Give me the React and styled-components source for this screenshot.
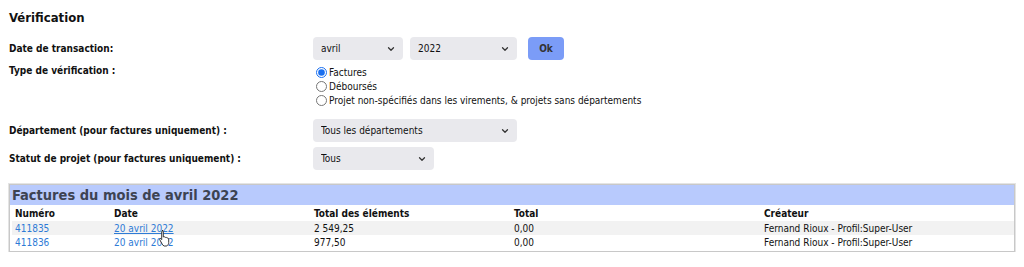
import React from "react";
import styled, { createGlobalStyle } from "styled-components";
import { ChevronDown } from "lucide-react";

const Global = createGlobalStyle`
	body {
		margin: 0;
		background: #fff;
		font-family: "DejaVu Sans Condensed", "DejaVu Sans", sans-serif;
		font-size: 10px;
		color: #111;
	}
`;

const Page = styled.div`
	padding: 10px 9px 0 9px;
`;

const Title = styled.h1`
	margin: 0 0 11px 0;
	font-size: 13px;
	font-weight: bold;
	line-height: 16px;
`;

const Form = styled.div`
	display: grid;
	grid-template-columns: 304px 1fr;
	align-items: center;
`;

const Label = styled.div`
	font-weight: bold;
	margin-top: ${(p) => p.$mt || 0}px;
	align-self: ${(p) => (p.$top ? "start" : "center")};
	padding-top: ${(p) => (p.$top ? 2 : 0)}px;
`;

const Controls = styled.div`
	display: flex;
	align-items: center;
	gap: 7px;
	margin-top: ${(p) => p.$mt || 0}px;
`;

const SelectWrap = styled.div`
	position: relative;
	width: ${(p) => p.$w}px;
	height: 23px;
`;

const Select = styled.select`
	appearance: none;
	width: 100%;
	height: 100%;
	border: none;
	border-radius: 4px;
	background: #e9e9ed;
	font-family: inherit;
	font-size: 10px;
	color: #111;
	padding: 0 8px;
`;

const Chevron = styled(ChevronDown)`
	position: absolute;
	right: 7px;
	top: 7px;
	pointer-events: none;
`;

const OkButton = styled.button`
	margin-left: 4px;
	width: 36px;
	height: 23px;
	border: none;
	border-radius: 4px;
	background: #7b9cf7;
	font-family: inherit;
	font-weight: bold;
	font-size: 10px;
	color: #333;
`;

const Radios = styled.div`
	display: flex;
	flex-direction: column;
	margin-top: 5px;
	padding-left: 3px;
`;

const RadioRow = styled.label`
	display: flex;
	align-items: center;
	height: 14px;
	gap: 2px;
`;

const Radio = styled.input`
	margin: 0;
	width: 11px;
	height: 11px;
	accent-color: #1a6ff0;
`;

const Box = styled.div`
	margin-top: 14px;
	width: 1006px;
	border: 1px solid #c8c8c8;
	box-shadow: 0 0 0 1px #e4e4e4;
	box-sizing: border-box;
	position: relative;
`;

const BoxHeader = styled.div`
	background: #b8cafd;
	height: 20px;
	line-height: 20px;
	padding-left: 2px;
	font-size: 14.5px;
	font-weight: bold;
	color: #3d4352;
`;

const Table = styled.table`
	width: 1002px;
	margin: 1px 0 2px 2px;
	border-collapse: collapse;
	table-layout: fixed;
`;

const Th = styled.th`
	text-align: left;
	font-weight: bold;
	padding: 0 0 0 3px;
	height: 15px;
	width: ${(p) => p.$w}px;
`;

const Tr = styled.tr`
	background: ${(p) => (p.$stripe ? "#f2f2f2" : "transparent")};
`;

const Td = styled.td`
	padding: 0 0 0 3px;
	height: 14px;
	white-space: nowrap;
`;

const A = styled.a`
	color: #2e7bd6;
	text-decoration: ${(p) => (p.$hover ? "underline" : "none")};
`;

const Cursor = styled.svg`
	position: absolute;
	left: 148px;
	top: 44px;
`;

const rows = [
	{ num: "411835", date: "20 avril 2022", el: "2 549,25", total: "0,00", who: "Fernand Rioux - Profil:Super-User" },
	{ num: "411836", date: "20 avril 2022", el: "977,50", total: "0,00", who: "Fernand Rioux - Profil:Super-User" },
];

export default function App() {
	return (
		<Page>
			<Global />
			<Title>Vérification</Title>
			<Form>
				<Label>Date de transaction:</Label>
				<Controls>
					<SelectWrap $w={90}>
						<Select defaultValue="avril">
							<option>avril</option>
						</Select>
						<Chevron size={10} strokeWidth={3} color="#333" />
					</SelectWrap>
					<SelectWrap $w={107}>
						<Select defaultValue="2022">
							<option>2022</option>
						</Select>
						<Chevron size={10} strokeWidth={3} color="#333" />
					</SelectWrap>
					<OkButton>Ok</OkButton>
				</Controls>

				<Label $top $mt={3}>Type de vérification :</Label>
				<Radios>
					<RadioRow>
						<Radio type="radio" name="type" defaultChecked />
						Factures
					</RadioRow>
					<RadioRow>
						<Radio type="radio" name="type" />
						Déboursés
					</RadioRow>
					<RadioRow>
						<Radio type="radio" name="type" />
						Projet non-spécifiés dans les virements, &amp; projets sans départements
					</RadioRow>
				</Radios>

				<Label $mt={12}>Département (pour factures uniquement) :</Label>
				<Controls $mt={12}>
					<SelectWrap $w={204}>
						<Select defaultValue="all">
							<option value="all">Tous les départements</option>
						</Select>
						<Chevron size={10} strokeWidth={3} color="#333" />
					</SelectWrap>
				</Controls>

				<Label $mt={5}>Statut de projet (pour factures uniquement) :</Label>
				<Controls $mt={5}>
					<SelectWrap $w={121}>
						<Select defaultValue="tous">
							<option value="tous">Tous</option>
						</Select>
						<Chevron size={10} strokeWidth={3} color="#333" />
					</SelectWrap>
				</Controls>
			</Form>

			<Box>
				<BoxHeader>Factures du mois de avril 2022</BoxHeader>
				<Table>
					<thead>
						<tr>
							<Th $w={96}>Numéro</Th>
							<Th $w={197}>Date</Th>
							<Th $w={197}>Total des éléments</Th>
							<Th $w={247}>Total</Th>
							<Th>Créateur</Th>
						</tr>
					</thead>
					<tbody>
						{rows.map((r, i) => (
							<Tr key={r.num} $stripe={i === 0}>
								<Td><A href="#">{r.num}</A></Td>
								<Td><A href="#" $hover={i === 0}>{r.date}</A></Td>
								<Td>{r.el}</Td>
								<Td>{r.total}</Td>
								<Td>{r.who}</Td>
							</Tr>
						))}
					</tbody>
				</Table>
				<Cursor width="14" height="18" viewBox="0 0 14 18">
					<path
						d="M4 1.5c.8 0 1.3.5 1.3 1.3V8l.2-.1c.7-.4 1.6 0 1.8.6.6-.4 1.5-.1 1.7.6.6-.3 1.5 0 1.7.8v3.6c0 1.7-.9 3-2.3 3.5H6.2c-.9-.3-1.5-1-2-1.9L1.7 10.6c-.4-.7.5-1.5 1.2-.9l.8.9V2.8c0-.8.5-1.3 1.3-1.3z"
						fill="#fff"
						stroke="#222"
						strokeWidth="0.9"
					/>
				</Cursor>
			</Box>
		</Page>
	);
}
